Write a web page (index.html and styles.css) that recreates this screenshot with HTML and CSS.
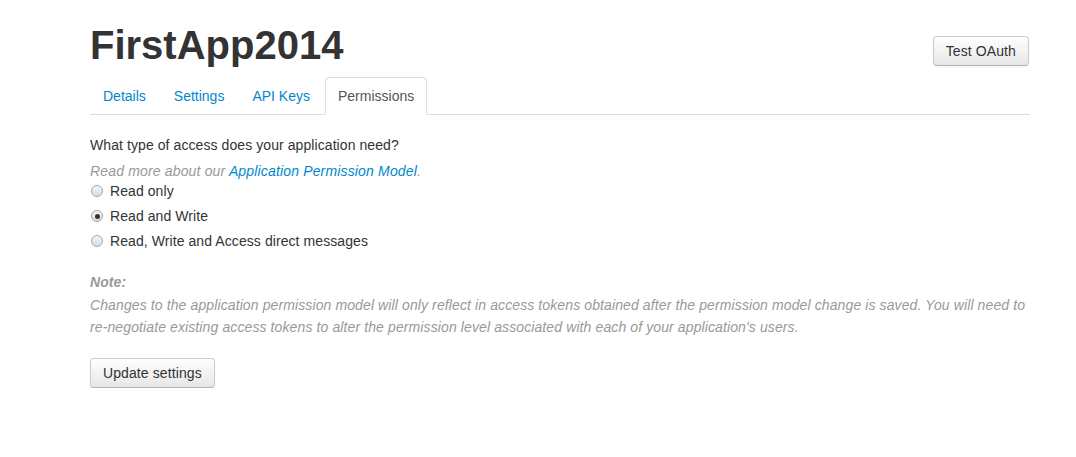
FILE: index.html
```html
<!DOCTYPE html>
<html>
<head>
<meta charset="utf-8">
<link rel="stylesheet" href="styles.css">
</head>
<body>
<div class="container">
  <div class="page-header">
    <h1 class="title">FirstApp2014</h1>
    <button class="btn btn-oauth">Test OAuth</button>
  </div>
  <ul class="nav-tabs">
    <li><a href="#">Details</a></li>
    <li><a href="#">Settings</a></li>
    <li><a href="#">API Keys</a></li>
    <li class="active"><a href="#">Permissions</a></li>
  </ul>
  <form class="perm-form">
    <div class="question">What type of access does your application need?</div>
    <div class="help">Read more about our <a href="#">Application Permission Model</a>.</div>
    <label class="radio"><input type="radio" name="access"> Read only</label>
    <label class="radio"><input type="radio" name="access" checked> Read and Write</label>
    <label class="radio"><input type="radio" name="access"> Read, Write and Access direct messages</label>
    <div class="note-title">Note:</div>
    <p class="note">Changes to the application permission model will only reflect in access tokens obtained after the permission model change is saved. You will need to re-negotiate existing access tokens to alter the permission level associated with each of your application's users.</p>
    <button type="button" class="btn btn-update">Update settings</button>
  </form>
</div>
</body>
</html>
```
FILE: styles.css
```css
html, body {
  margin: 0;
  padding: 0;
  background: #fff;
}
body {
  font-family: "Liberation Sans", Arial, sans-serif;
  font-size: 14px;
  line-height: 20px;
  color: #333;
  letter-spacing: 0.08px;
}
.container {
  width: 940px;
  margin-left: 90px;
  padding-top: 25px;
}
.page-header {
  display: flex;
  justify-content: space-between;
  align-items: flex-start;
  height: 40px;
}
.title {
  margin: 0;
  font-size: 40px;
  line-height: 40px;
  font-weight: bold;
  color: #333;
  letter-spacing: 0;
}
.btn {
  font-family: "Liberation Sans", Arial, sans-serif;
  font-size: 14px;
  line-height: 20px;
  letter-spacing: 0.1px;
  color: #333;
  padding: 4px 12px;
  border: 1px solid #cccccc;
  border-bottom-color: #b3b3b3;
  border-radius: 4px;
  background: linear-gradient(to bottom, #ffffff, #e6e6e6);
  box-shadow: inset 0 1px 0 rgba(255,255,255,.2), 0 1px 2px rgba(0,0,0,.05);
  cursor: pointer;
}
.btn-oauth {
  margin-top: 11px;
  margin-right: 1px;
}
.nav-tabs {
  list-style: none;
  margin: 12px 0 20px 0;
  padding: 0;
  display: flex;
  border-bottom: 1px solid #ddd;
  letter-spacing: 0;
}
.nav-tabs li {
  margin-bottom: -1px;
}
.nav-tabs a {
  display: block;
  padding: 8px 12px;
  margin-right: 2px;
  line-height: 20px;
  color: #0088cc;
  text-decoration: none;
  border: 1px solid transparent;
  border-radius: 4px 4px 0 0;
}
.nav-tabs li.active a {
  color: #555;
  background: #fff;
  border-color: #ddd #ddd transparent #ddd;
}
.perm-form {
  margin: 0;
}
.question {
  margin-bottom: 6px;
}
.help {
  color: #999;
  font-style: italic;
  letter-spacing: 0.16px;
}
.help a {
  color: #0088cc;
  text-decoration: none;
}
.radio {
  display: flex;
  align-items: center;
  line-height: 20px;
  margin-bottom: 5px;
}
.radio input {
  -webkit-appearance: none;
  appearance: none;
  width: 12px;
  height: 12px;
  margin: 0 7px 0 1px;
  border: 1px solid #a6a6a6;
  border-radius: 50%;
  background: linear-gradient(to bottom, #f4f4f4, #dcdcdc);
  position: relative;
  flex: none;
}
.radio input:checked::after {
  content: "";
  position: absolute;
  left: 2.5px;
  top: 2.5px;
  width: 5px;
  height: 5px;
  border-radius: 50%;
  background: #333;
}
.note-title {
  margin-top: 21px;
  color: #999;
  font-style: italic;
  font-weight: bold;
}
.note {
  margin: 2px 0 20px 0;
  color: #999;
  font-style: italic;
  line-height: 22px;
  letter-spacing: 0.11px;
}
.btn-update {
  display: block;
}
```
